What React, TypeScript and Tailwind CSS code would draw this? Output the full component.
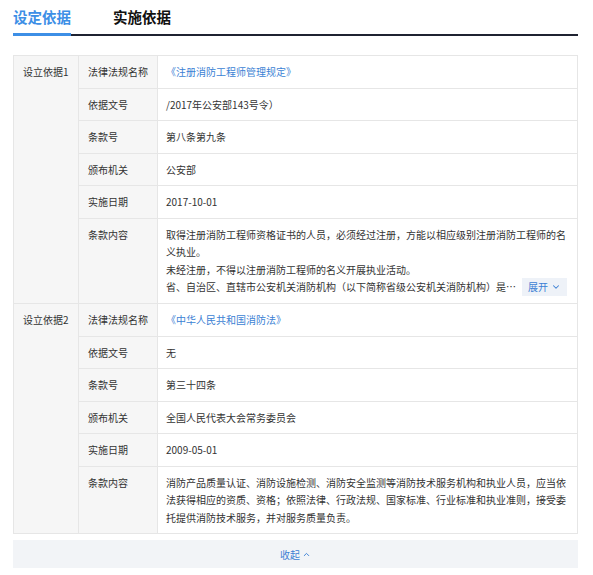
import React from 'react';
import { ChevronDown, ChevronUp } from 'lucide-react';

interface Field {
  label: string;
  value: React.ReactNode;
  multi?: boolean;
}

interface Basis {
  title: string;
  fields: Field[];
}

const FONT = { fontFamily: '"Noto Sans CJK SC", "Liberation Sans", sans-serif' };

const bases: Basis[] = [
  {
    title: '设立依据1',
    fields: [
      { label: '法律法规名称', value: <span className="text-[#3b7fd4]">《注册消防工程师管理规定》</span> },
      { label: '依据文号', value: '/2017年公安部143号令）' },
      { label: '条款号', value: '第八条第九条' },
      { label: '颁布机关', value: '公安部' },
      { label: '实施日期', value: '2017-10-01' },
      {
        label: '条款内容',
        multi: true,
        value: (
          <>
            <p>取得注册消防工程师资格证书的人员，必须经过注册，方能以相应级别注册消防工程师的名义执业。</p>
            <p>未经注册，不得以注册消防工程师的名义开展执业活动。</p>
            <div className="flex items-center gap-[5px]">
              <p className="min-w-0 flex-1 truncate">省、自治区、直辖市公安机关消防机构（以下简称省级公安机关消防机构）是省级注册审批部门，负责本行政区域内注册消防工程师的注册审批工作。</p>
              <button className="flex h-[18px] w-[45px] shrink-0 items-center justify-center gap-[3px] bg-[#eef2f8] text-[#3b7fd4]">
                展开
                <ChevronDown className="h-[10px] w-[10px]" strokeWidth={2.5} />
              </button>
            </div>
          </>
        ),
      },
    ],
  },
  {
    title: '设立依据2',
    fields: [
      { label: '法律法规名称', value: <span className="text-[#3b7fd4]">《中华人民共和国消防法》</span> },
      { label: '依据文号', value: '无' },
      { label: '条款号', value: '第三十四条' },
      { label: '颁布机关', value: '全国人民代表大会常务委员会' },
      { label: '实施日期', value: '2009-05-01' },
      {
        label: '条款内容',
        multi: true,
        value: '消防产品质量认证、消防设施检测、消防安全监测等消防技术服务机构和执业人员，应当依法获得相应的资质、资格；依照法律、行政法规、国家标准、行业标准和执业准则，接受委托提供消防技术服务，并对服务质量负责。',
      },
    ],
  },
];

function BasisBlock({ basis, last }: { basis: Basis; last: boolean }) {
  return (
    <div className={`flex ${last ? '' : 'border-b border-[#e6e6e6]'}`}>
      <div className="w-[65px] shrink-0 border-r border-[#e6e6e6] bg-[#f6f6f6] px-[9px] py-[7px] leading-[17.5px]">
        {basis.title}
      </div>
      <div className="min-w-0 flex-1">
        {basis.fields.map((f, i) => (
          <div
            key={f.label}
            className={`flex ${i < basis.fields.length - 1 ? 'border-b border-[#e6e6e6]' : ''}`}
          >
            <div className="w-[79px] shrink-0 border-r border-[#e6e6e6] bg-[#f6f6f6] px-[9px] py-[7px] leading-[17.5px]">
              {f.label}
            </div>
            <div className="min-w-0 flex-1 bg-white py-[7px] pl-[8px] pr-[10px] leading-[17.5px]">{f.value}</div>
          </div>
        ))}
      </div>
    </div>
  );
}

export default function App() {
  return (
    <div className="min-h-screen bg-white pl-[13px] pr-[15px] text-[10px] text-[#333]" style={FONT}>
      <div className="flex items-end">
        <div className="border-b-[3px] border-[#3d8fe6] pt-[9px] pb-[8px] text-[14.5px] font-bold leading-[16px] text-[#3d8fe6]">
          设定依据
        </div>
        <div className="flex-1 border-b-2 border-[#1f2331] pl-[42px] pt-[9px] pb-[9px] text-[14.5px] font-bold leading-[16px] text-[#111]">
          实施依据
        </div>
      </div>

      <div className="mt-[19px] border border-[#e6e6e6]">
        {bases.map((b, i) => (
          <BasisBlock key={b.title} basis={b} last={i === bases.length - 1} />
        ))}
      </div>

      <button className="mt-[6px] flex h-[28px] w-full items-center justify-center gap-[2px] bg-[#f2f4f7] text-[#3b7fd4]">
        收起
        <ChevronUp className="h-[9px] w-[9px]" strokeWidth={2.5} />
      </button>
    </div>
  );
}
